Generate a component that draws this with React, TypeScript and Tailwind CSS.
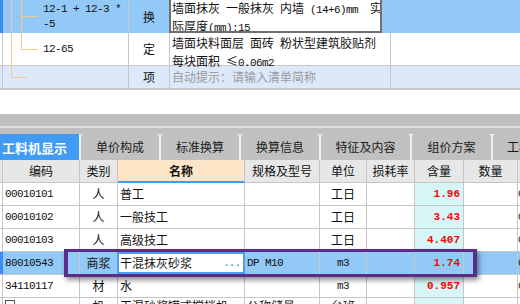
import React from 'react';

const mono = "font-['Liberation_Mono',monospace] text-[11px] tracking-[-0.6px] whitespace-pre";
const num = "font-['Liberation_Mono',monospace] text-[11px] font-bold text-[#ff0000]";

const CJK = /[\u2264\u3000-\u9fff\uff00-\uffef]/;

// splits a string into CJK / latin runs so latin gets the narrow mono font
function Txt({ s }: { s: string }) {
  const parts = s.match(/[\u2264\u3000-\u9fff\uff00-\uffef]+|[^\u2264\u3000-\u9fff\uff00-\uffef]+/g) ?? [];
  return (
    <>
      {parts.map((p, i) =>
        CJK.test(p) ? (
          <span key={i}>{p}</span>
        ) : (
          <span key={i} className={mono}>
            {p}
          </span>
        )
      )}
    </>
  );
}

function TopGrid() {
  return (
    <div className="relative">
      {/* row 1 - selected, editing description */}
      <div className="flex h-[33px] bg-[#92c9f7]">
        <div className="w-[3px] shrink-0 bg-[#3a8cf0]" />
        <div className="w-[126px] shrink-0 border-r border-[#c6c6c6] flex flex-col justify-center pl-[40px] leading-[15px]">
          <Txt s="12-1 + 12-3 *" />
          <Txt s="-5" />
        </div>
        <div className="w-[40px] shrink-0 flex items-center justify-center">换</div>
        <div className="w-[213px] shrink-0 bg-white border-2 border-t-0 border-[#6f6f6f] pl-px leading-[15px] whitespace-nowrap overflow-hidden">
          <div>
            <Txt s="墙面抹灰 一般抹灰 内墙 (14+6)mm  实" />
          </div>
          <div>
            <Txt s="际厚度(mm):15" />
          </div>
        </div>
        <div className="flex-1" />
      </div>

      {/* row 2 */}
      <div className="flex h-[33px] bg-white border-b border-[#c6c6c6]">
        <div className="w-[3px] shrink-0 border-r border-[#c6c6c6]" />
        <div className="w-[126px] shrink-0 border-r border-[#c6c6c6] flex items-center pl-[40px]">
          <Txt s="12-65" />
        </div>
        <div className="w-[41px] shrink-0 border-r border-[#c6c6c6] flex items-center justify-center">定</div>
        <div className="w-[221px] shrink-0 border-r border-[#c6c6c6] pl-[2px] pt-[2px] leading-[15px] whitespace-nowrap">
          <div>
            <Txt s="墙面块料面层 面砖 粉状型建筑胶贴剂" />
          </div>
          <div>
            <Txt s="每块面积 ≤0.06m2" />
          </div>
        </div>
        <div className="flex-1" />
      </div>

      {/* row 3 - new item hint */}
      <div className="flex h-[24px] bg-[#dce9fb] border-b-2 border-[#c6c6c6]">
        <div className="w-[3px] shrink-0 border-r border-[#c6c6c6]" />
        <div className="w-[126px] shrink-0 border-r border-[#c6c6c6]" />
        <div className="w-[41px] shrink-0 border-r border-[#c6c6c6] flex items-center justify-center">项</div>
        <div className="w-[221px] shrink-0 border-r border-[#c6c6c6] pl-[2px] flex items-center text-[#9a9a9a]">
          自动提示：请输入清单简称
        </div>
        <div className="flex-1" />
      </div>

      {/* tree connectors */}
      <svg className="absolute left-0 top-0 pointer-events-none" width="40" height="90" viewBox="0 0 40 90">
        <path d="M11.5 0V77.5H27" fill="none" stroke="#f7c98e" strokeWidth="1" />
        <path d="M21.5 0V49.5H38M21.5 16.5H38" fill="none" stroke="#f7c98e" strokeWidth="1" />
      </svg>
    </div>
  );
}

const tabs = [
  { label: '单价构成', w: 'w-[78px]' },
  { label: '标准换算', w: 'w-[78px]' },
  { label: '换算信息', w: 'w-[78px]' },
  { label: '特征及内容', w: 'w-[89px]' },
  { label: '组价方案', w: 'w-[79px]' },
  { label: '工程量明细', w: 'w-[88px]' },
];

function Tabs() {
  return (
    <div className="bg-[#bfbfbf] pt-[6px]">
      <div className="flex h-[26px] gap-[2px] bg-[#f0f0f0]">
        <div className="w-[79px] shrink-0 bg-[#3f9bf4] text-white font-bold text-[13px] flex items-center pl-[2px]">
          工料机显示
        </div>
        {tabs.map((t) => (
          <div
            key={t.label}
            className={`${t.w} shrink-0 bg-[#c0c0c0] rounded-t-[3px] flex items-center justify-center text-[#1a1a1a]`}
          >
            {t.label}
          </div>
        ))}
      </div>
    </div>
  );
}

function Header() {
  const c = 'h-full shrink-0 border-r border-b border-[#c6c6c6] flex items-center justify-center';
  return (
    <div className="flex h-[23px] bg-[#e7e7e7]">
      <div className={`w-[3px] ${c}`} />
      <div className={`w-[77px] ${c}`}>编码</div>
      <div className={`w-[38px] ${c}`}>类别</div>
      <div className="w-[127px] h-full shrink-0 border-r border-[#c6c6c6] border-b-2 border-b-[#3f9bf4] bg-[#fde6c7] flex items-center justify-center font-bold">
        名称
      </div>
      <div className={`w-[75px] ${c}`}>规格及型号</div>
      <div className={`w-[47px] ${c}`}>单位</div>
      <div className={`w-[48px] ${c}`}>损耗率</div>
      <div className={`w-[49px] ${c}`}>含量</div>
      <div className={`w-[54px] ${c}`}>数量</div>
      <div className="flex-1 h-full border-b border-[#c6c6c6]" />
    </div>
  );
}

type Row = {
  code: string;
  kind: string;
  name: string;
  spec: string;
  unit: string;
  qty: string;
  tail: string;
  selected?: boolean;
  last?: boolean;
};

const rows: Row[] = [
  { code: '00010101', kind: '人', name: '普工', spec: '', unit: '工日', qty: '1.96', tail: '0' },
  { code: '00010102', kind: '人', name: '一般技工', spec: '', unit: '工日', qty: '3.43', tail: '0' },
  { code: '00010103', kind: '人', name: '高级技工', spec: '', unit: '工日', qty: '4.407', tail: '0' },
  { code: '80010543', kind: '商浆', name: '干混抹灰砂浆', spec: 'DP M10', unit: 'm3', qty: '1.74', tail: '0', selected: true },
  { code: '34110117', kind: '材', name: '水', spec: '', unit: 'm3', qty: '0.957', tail: '0' },
  { code: '', kind: '机', name: '干混砂浆罐式搅拌机', spec: '公称储量', unit: '台班', qty: '', tail: '', last: true },
];

function DataRow({ r }: { r: Row }) {
  const align = r.last ? 'items-start pt-[2px]' : 'items-center';
  const c = `h-full shrink-0 border-r border-[#c6c6c6] flex ${align}`;
  return (
    <div className={`flex h-[23px] border-b border-[#c6c6c6] ${r.selected ? 'bg-[#92c9f7]' : 'bg-white'}`}>
      {r.selected ? (
        <div className="w-[3px] h-full shrink-0 bg-[#3a8cf0]" />
      ) : (
        <div className="w-[3px] h-full shrink-0 border-r border-[#c6c6c6]" />
      )}
      <div className={`w-[77px] pl-[2px] ${c}`}>
        {r.last ? (
          <span className="w-[10px] h-[9px] border border-[#555] flex items-center justify-center">
            <span className="w-[6px] h-px bg-[#555]" />
          </span>
        ) : (
          <Txt s={r.code} />
        )}
      </div>
      {r.selected ? (
        <>
          <div className="w-[37px] h-full shrink-0 flex items-center justify-center">{r.kind}</div>
          <div className="w-[128px] h-full shrink-0 bg-white border-2 border-[#4a9cf5] flex items-center justify-between pl-px pr-[3px]">
            <span>{r.name}</span>
            <span className="font-['Liberation_Mono',monospace] text-[11px] font-bold text-[#5b9bd8] tracking-[-1px]">...</span>
          </div>
        </>
      ) : (
        <>
          <div className={`w-[38px] justify-center ${c}`}>{r.kind}</div>
          <div className={`w-[127px] pl-[2px] overflow-hidden whitespace-nowrap ${c}`}>{r.name}</div>
        </>
      )}
      <div className={`w-[75px] pl-[2px] overflow-hidden whitespace-nowrap ${c}`}>
        <Txt s={r.spec} />
      </div>
      <div className={`w-[47px] justify-center ${c}`}>
        <Txt s={r.unit} />
      </div>
      <div className={`w-[48px] ${c}`} />
      <div className={`w-[49px] justify-end pr-[3px] ${c} ${r.selected ? '' : 'bg-[#d6f6f7]'}`}>
        <span className={num}>{r.qty}</span>
      </div>
      <div className={`w-[54px] ${c}`} />
      <div className={`flex-1 h-full flex ${align} overflow-hidden`}>
        <span className="font-['Liberation_Mono',monospace] text-[11px] text-[#222]">{r.tail}</span>
      </div>
    </div>
  );
}

export default function App() {
  return (
    <div className="relative w-[520px] h-[304px] overflow-hidden bg-white text-[12px] leading-none text-[#111] font-['Noto_Sans_CJK_SC',sans-serif]">
      <TopGrid />
      <div className="h-[24px]" />
      <div className="h-[12px] bg-[#bfbfbf]" />
      <div className="h-[2px] bg-[#dedede]" />
      <Tabs />
      <Header />
      {rows.map((r) => (
        <DataRow key={r.name} r={r} />
      ))}
      {/* purple highlight frame around the selected material */}
      <div className="absolute left-[64px] top-[249px] w-[413px] h-[28px] border-x-4 border-y-[3px] border-[#5b2d86] shadow-[2px_3px_5px_rgba(0,0,0,0.45)] pointer-events-none" />
    </div>
  );
}
